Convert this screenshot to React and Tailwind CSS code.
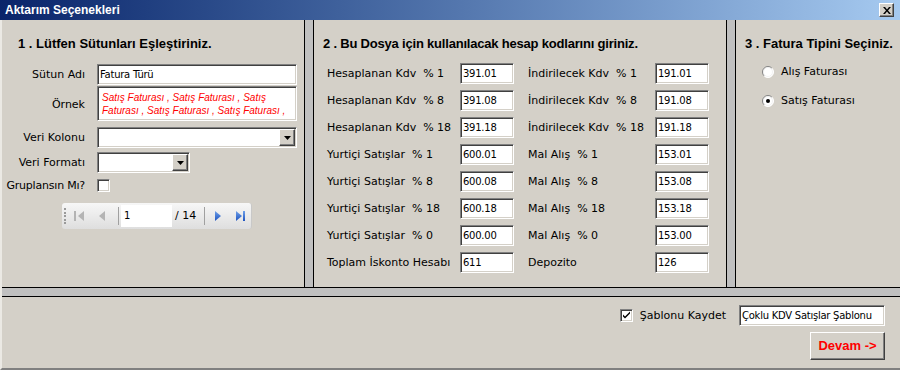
import React from 'react';

const sunken =
  'bg-white border border-t-[#808080] border-l-[#808080] border-b-white border-r-white shadow-[inset_1px_1px_0_#404040,inset_-1px_-1px_0_#d4d0c8]';
const raised =
  'bg-[#d4d0c8] border border-t-white border-l-white border-b-[#404040] border-r-[#404040] shadow-[inset_-1px_-1px_0_#808080]';

const label = "font-['DejaVu_Sans',sans-serif] text-[11px] text-black whitespace-pre leading-[14px]";
const field = "font-['DejaVu_Sans',sans-serif] text-[10px] tracking-tight text-black leading-[14px]";
const header = "font-['Liberation_Sans',sans-serif] font-bold text-[13px] leading-[16px] text-black whitespace-nowrap";

function Input({ value, w = 'w-[54px]' }) {
  return (
    <div className={`${sunken} ${w} h-[21px] flex items-center pl-[2px] overflow-hidden`}>
      <span className={field}>{value}</span>
    </div>
  );
}

function DropArrow() {
  return (
    <div className={`${raised} w-[16px] h-[17px] flex items-center justify-center`}>
      <svg width="7" height="4" viewBox="0 0 7 4">
        <path d="M0 0h7L3.5 4z" fill="#000" />
      </svg>
    </div>
  );
}

function Combo({ w }) {
  return (
    <div className={`${sunken} ${w} h-[21px] flex items-center justify-end pr-[1px]`}>
      <DropArrow />
    </div>
  );
}

function Check({ checked }) {
  return (
    <div className={`${sunken} w-[13px] h-[13px] flex items-center justify-center`}>
      {checked && (
        <svg width="9" height="9" viewBox="0 0 9 9">
          <path d="M1 3.5l2 2 5-5v2l-5 5-2-2z" fill="#000" />
        </svg>
      )}
    </div>
  );
}

function Radio({ checked }) {
  return (
    <svg width="12" height="12" viewBox="0 0 12 12">
      <defs>
        <linearGradient id="rg" x1="0" y1="0" x2="1" y2="1">
          <stop offset="0.45" stopColor="#808080" />
          <stop offset="0.55" stopColor="#ffffff" />
        </linearGradient>
      </defs>
      <circle cx="6" cy="6" r="5.5" fill="#fff" stroke="url(#rg)" />
      <circle cx="6" cy="6" r="4.5" fill="none" stroke="#eaeaea" strokeWidth="0.6" />
      {checked && <circle cx="6" cy="6" r="2" fill="#000" />}
    </svg>
  );
}

function Pager() {
  return (
    <div className="w-[190px] h-[26px] ml-[60px] rounded-[3px] bg-gradient-to-b from-[#f7f7f7] to-[#dedede] border-r border-[#c8c8c8] flex items-center">
      <div className="ml-[2px] w-[2px] h-[16px] flex flex-col justify-between">
        {[0, 1, 2, 3, 4].map((i) => (
          <div key={i} className="w-[2px] h-[2px] bg-[#9a9a9a]" />
        ))}
      </div>
      <svg className="ml-[7px]" width="12" height="12" viewBox="0 0 12 12">
        <rect x="1" y="1" width="2" height="10" fill="#b4b4b4" />
        <path d="M11 1v10L5 6z" fill="#b4b4b4" />
      </svg>
      <svg className="ml-[13px]" width="8" height="12" viewBox="0 0 8 12">
        <path d="M7 1v10L1 6z" fill="#b4b4b4" />
      </svg>
      <div className="ml-[12px] w-px h-[18px] bg-[#a0a0a0]" />
      <div className="ml-[2px] w-[51px] h-[22px] bg-white flex items-center pl-[3px]">
        <span className={field}>1</span>
      </div>
      <span className={`${label} ml-[3px]`}>/ 14</span>
      <div className="ml-[8px] w-px h-[18px] bg-[#a0a0a0]" />
      <svg className="ml-[9px]" width="8" height="12" viewBox="0 0 8 12">
        <defs>
          <linearGradient id="bl" x1="0" y1="0" x2="0" y2="1">
            <stop offset="0" stopColor="#6fa0e8" />
            <stop offset="1" stopColor="#1f54c0" />
          </linearGradient>
        </defs>
        <path d="M1 1v10l6-5z" fill="url(#bl)" />
      </svg>
      <svg className="ml-[13px]" width="12" height="12" viewBox="0 0 12 12">
        <path d="M1 1v10l6-5z" fill="url(#bl)" />
        <rect x="8" y="1" width="2" height="10" fill="url(#bl)" />
      </svg>
    </div>
  );
}

const kdv = [
  ['Hesaplanan Kdv  % 1', '391.01', 'İndirilecek Kdv  % 1', '191.01'],
  ['Hesaplanan Kdv  % 8', '391.08', 'İndirilecek Kdv  % 8', '191.08'],
  ['Hesaplanan Kdv  % 18', '391.18', 'İndirilecek Kdv  % 18', '191.18'],
  ['Yurtiçi Satışlar  % 1', '600.01', 'Mal Alış  % 1', '153.01'],
  ['Yurtiçi Satışlar  % 8', '600.08', 'Mal Alış  % 8', '153.08'],
  ['Yurtiçi Satışlar  % 18', '600.18', 'Mal Alış  % 18', '153.18'],
  ['Yurtiçi Satışlar  % 0', '600.00', 'Mal Alış  % 0', '153.00'],
  ['Toplam İskonto Hesabı', '611', 'Depozito', '126'],
];

export default function App() {
  return (
    <div className="w-[900px] h-[370px] bg-[#d4d0c8] flex flex-col overflow-hidden">
      {/* Title bar */}
      <div className="h-[20px] shrink-0 bg-gradient-to-r from-[#0a246a] to-[#a6caf0] flex items-center justify-between pl-[5px] pr-[6px]">
        <span className="font-['Liberation_Sans',sans-serif] font-bold text-[12px] text-white">Aktarım Seçenekleri</span>
        <div className={`${raised} w-[15px] h-[14px] flex items-center justify-center`}>
          <svg width="8" height="7" viewBox="0 0 8 7">
            <path d="M0 0h2l2 2.5L6 0h2L5 3.5 8 7H6L4 4.5 2 7H0l3-3.5z" fill="#000" />
          </svg>
        </div>
      </div>

      <div className="flex-1 flex flex-col border-l-2 border-b-2 border-l-[#ebe9e4] border-b-[#808080]">
        <div className="h-[267px] flex">
          {/* Column 1 */}
          <div className="w-[302px] pt-[16px]">
            <div className={`${header} pl-[16px]`}>1 . Lütfen Sütunları Eşleştiriniz.</div>
            <div className="mt-[12px] flex flex-col">
              <div className="flex items-center h-[21px]">
                <div className={`${label} w-[83px] text-right`}>Sütun Adı</div>
                <div className="ml-[12px]">
                  <div className={`${sunken} w-[200px] h-[21px] flex items-center pl-[2px]`}>
                    <span className={field}>Fatura Türü</span>
                  </div>
                </div>
              </div>
              <div className="flex items-center h-[35px] mt-[1px]">
                <div className={`${label} w-[83px] text-right mt-[3px]`}>Örnek</div>
                <div className={`${sunken} ml-[12px] w-[200px] h-[35px] pl-[4px] pt-[4px]`}>
                  <div className="font-['Liberation_Sans',sans-serif] italic text-[10px] leading-[13px] text-[#ff0000] whitespace-nowrap">
                    Satış Faturası , Satış Faturası , Satış
                    <br />
                    Faturası , Satış Faturası , Satış Faturası ,
                  </div>
                </div>
              </div>
              <div className="flex items-center h-[21px] mt-[6px]">
                <div className={`${label} w-[83px] text-right`}>Veri Kolonu</div>
                <div className="ml-[12px]">
                  <Combo w="w-[200px]" />
                </div>
              </div>
              <div className="flex items-center h-[21px] mt-[4px]">
                <div className={`${label} w-[83px] text-right`}>Veri Formatı</div>
                <div className="ml-[12px]">
                  <Combo w="w-[93px]" />
                </div>
              </div>
              <div className="flex items-center h-[13px] mt-[6px]">
                <div className={`${label} w-[83px] text-right tracking-[-0.2px]`}>Gruplansın Mı?</div>
                <div className="ml-[12px]">
                  <Check />
                </div>
              </div>
              <div className="mt-[11px]">
                <Pager />
              </div>
            </div>
          </div>

          <div className="w-[10px] bg-[#c0c0c0] border-x border-black" />

          {/* Column 2 */}
          <div className="w-[412px] pt-[16px]">
            <div className={`${header} pl-[9px] tracking-[-0.2px]`}>2 . Bu Dosya için kullanılacak hesap kodlarını giriniz.</div>
            <div className="mt-[11px] pl-[13px] flex flex-col gap-[6px]">
              {kdv.map(([l1, v1, l2, v2]) => (
                <div key={l1} className="flex items-center h-[21px]">
                  <div className={`${label} w-[133px]`}>{l1}</div>
                  <Input value={v1} />
                  <div className={`${label} w-[127px] ml-[14px]`}>{l2}</div>
                  <Input value={v2} />
                </div>
              ))}
            </div>
          </div>

          <div className="w-[10px] bg-[#c0c0c0] border-x border-black" />

          {/* Column 3 */}
          <div className="flex-1 pt-[16px]">
            <div className={`${header} pl-[9px]`}>3 . Fatura Tipini Seçiniz.</div>
            <div className="mt-[13px] pl-[26px] flex flex-col gap-[16px]">
              <div className="flex items-center h-[13px] gap-[7px]">
                <Radio />
                <span className={label}>Alış Faturası</span>
              </div>
              <div className="flex items-center h-[13px] gap-[7px]">
                <Radio checked />
                <span className={label}>Satış Faturası</span>
              </div>
            </div>
          </div>
        </div>

        <div className="h-[10px] bg-[#c0c0c0] border-y border-black" />

        {/* Footer */}
        <div className="flex-1 flex flex-col items-end pt-[8px] pr-[15px]">
          <div className="flex items-center h-[21px]">
            <Check checked />
            <span className={`${label} ml-[7px]`}>Şablonu Kaydet</span>
            <div className={`${sunken} ml-[13px] w-[146px] h-[21px] flex items-center pl-[2px]`}>
              <span className={field}>Çoklu KDV Satışlar Şablonu</span>
            </div>
          </div>
          <div className={`${raised} mt-[6px] w-[75px] h-[28px] flex items-center justify-center`}>
            <span className="font-['Liberation_Sans',sans-serif] font-bold text-[13px] text-[#ff0000]">Devam -&gt;</span>
          </div>
        </div>
      </div>
    </div>
  );
}
